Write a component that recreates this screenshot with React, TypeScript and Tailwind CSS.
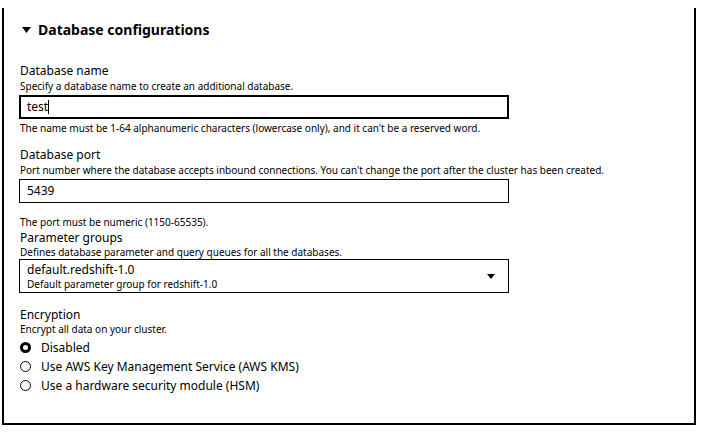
const Radio = ({ checked, label }: { checked?: boolean; label: string }) => {
  return (
    <div className="flex items-center h-[19px]">
      <span
        className={
          checked
            ? "w-[11px] h-[11px] rounded-full border-[3px] border-black bg-white ml-[1px]"
            : "w-[11px] h-[11px] rounded-full border border-black bg-white ml-[1px]"
        }
      />
      <span className="ml-[10px] text-[12px] leading-[19px]">{label}</span>
    </div>
  );
};

const App = () => {
  return (
    <div
      className="w-[713px] h-[435px] bg-white text-black overflow-hidden"
      style={{ fontFamily: '"Noto Sans", "Open Sans", sans-serif' }}
    >
      <div className="ml-[2px] mt-[8px] w-[694px] h-[417px] border-l-2 border-r-2 border-b-2 border-black pt-[12px] pl-[15px]">
        <div className="flex items-center h-[20px] pl-[3px]">
          <svg width="9" height="6" viewBox="0 0 9 6" className="mr-[7px]">
            <path d="M0 0 L9 0 L4.5 6 Z" fill="black" />
          </svg>
          <span className="text-[14px] font-bold leading-[20px]">Database configurations</span>
        </div>

        <div className="mt-[23px] pl-[1px]">
          <div className="text-[12px] leading-[16px]">Database name</div>
          <div className="text-[10px] leading-[14px]">Specify a database name to create an additional database.</div>
        </div>
        <div className="mt-[2px] w-[490px] h-[24px] border-2 border-black flex items-center pl-[6px] text-[12px]">
          test<span className="w-px h-[14px] bg-black" />
        </div>
        <div className="mt-[2px] pl-[1px] text-[10px] leading-[14px]">
          The name must be 1-64 alphanumeric characters (lowercase only), and it can't be a reserved word.
        </div>

        <div className="mt-[12px] pl-[1px]">
          <div className="text-[12px] leading-[16px]">Database port</div>
          <div className="text-[10px] leading-[14px]">
            Port number where the database accepts inbound connections. You can't change the port after the cluster has been created.
          </div>
        </div>
        <div className="mt-[2px] w-[490px] h-[24px] border border-black flex items-center pl-[7px] text-[12px]">
          5439
        </div>
        <div className="mt-[12px] pl-[1px] text-[10px] leading-[14px]">The port must be numeric (1150-65535).</div>

        <div className="mt-[1px] pl-[1px]">
          <div className="text-[12px] leading-[16px]">Parameter groups</div>
          <div className="text-[10px] leading-[12px]">Defines database parameter and query queues for all the databases.</div>
        </div>
        <div className="mt-[1px] w-[490px] h-[34px] border border-black flex items-center justify-between pl-[7px] pr-[13px]">
          <div className="flex flex-col">
            <span className="text-[12px] leading-[15px]">default.redshift-1.0</span>
            <span className="text-[10px] leading-[14px]">Default parameter group for redshift-1.0</span>
          </div>
          <svg width="8" height="5" viewBox="0 0 8 5">
            <path d="M0 0 L8 0 L4 5 Z" fill="black" />
          </svg>
        </div>

        <div className="mt-[14px] pl-[1px]">
          <div className="text-[12px] leading-[16px]">Encryption</div>
          <div className="text-[10px] leading-[12px]">Encrypt all data on your cluster.</div>
        </div>
        <div className="mt-[3px]">
          <Radio checked label="Disabled" />
          <Radio label="Use AWS Key Management Service (AWS KMS)" />
          <Radio label="Use a hardware security module (HSM)" />
        </div>
      </div>
    </div>
  );
};

export default App;
